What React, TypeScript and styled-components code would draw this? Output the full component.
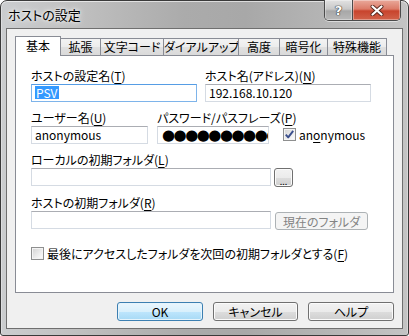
import React from "react";
import styled, { createGlobalStyle } from "styled-components";

const GlobalStyle = createGlobalStyle`
  html, body {
    margin: 0;
    padding: 0;
    background: #ffffff;
  }
  body {
    font-family: "Noto Sans CJK JP", "Liberation Sans", sans-serif;
    font-size: 12px;
    color: #000;
  }
  #root {
    width: 409px;
    height: 336px;
  }
`;

const Window = styled.div`
  box-sizing: border-box;
  width: 409px;
  height: 336px;
  display: flex;
  flex-direction: column;
  padding: 0 5px 6px;
  border: 1px solid #3a3a3a;
  border-radius: 7px 7px 3px 3px;
  background: linear-gradient(
    to right,
    #cbcdcf 0%,
    #bfbfbf 20%,
    #ababab 45%,
    #a8a8a8 60%,
    #b5b5b5 80%,
    #c4c4c4 100%
  );
  box-shadow: inset 0 1px 0 rgba(255, 255, 255, 0.6),
    inset 1px 0 0 rgba(255, 255, 255, 0.35), inset -1px 0 0 rgba(255, 255, 255, 0.35);
`;

const TitleBar = styled.div`
  height: 27px;
  display: flex;
  align-items: flex-start;
  flex-shrink: 0;
`;

const Caption = styled.div`
  flex: 1;
  height: 27px;
  line-height: 27px;
  padding-left: 2px;
  font-size: 13px;
  font-feature-settings: "palt";
  text-shadow: 0 0 6px rgba(255, 255, 255, 0.95), 0 0 3px rgba(255, 255, 255, 0.9);
`;

const ControlBox = styled.div`
  display: flex;
  margin-top: -1px;
  margin-right: 2px;
  height: 20px;
  border: 1px solid #4b4b4b;
  border-top: none;
  border-radius: 0 0 5px 5px;
  overflow: hidden;
  box-shadow: 0 1px 0 rgba(255, 255, 255, 0.5);
`;

const CaptionButton = styled.div<{ $close?: boolean }>`
  width: ${(p) => (p.$close ? 47 : 27)}px;
  height: 20px;
  display: flex;
  align-items: center;
  justify-content: center;
  box-shadow: inset 0 0 0 1px rgba(255, 255, 255, 0.35);
  background: ${(p) =>
    p.$close
      ? "linear-gradient(#e9a99b 0%, #dc7b68 45%, #c8442d 55%, #d1624a 100%)"
      : "linear-gradient(#e2e2e2 0%, #c8c8c8 45%, #a7a7a7 55%, #b9b9b9 100%)"};
  & + & {
    border-left: 1px solid #4b4b4b;
  }
`;

const HelpGlyph = styled.span`
  font-family: "DejaVu Sans", sans-serif;
  font-weight: bold;
  font-size: 13px;
  line-height: 1;
  color: #ffffff;
  text-shadow: 0 0 1px #333, 0 0 1px #333, 0 0 1px #333;
`;

const Client = styled.div`
  flex: 1;
  display: flex;
  flex-direction: column;
  border: 1px solid #6f6f6f;
  background: #f0f0f0;
  padding: 7px 8px 0;
`;

const TabStrip = styled.div`
  display: flex;
  align-items: flex-start;
  height: 20px;
  margin-bottom: -1px;
`;

const Tab = styled.div<{ $w: number; $active?: boolean }>`
  box-sizing: border-box;
  width: ${(p) => p.$w}px;
  text-align: center;
  font-feature-settings: "palt";
  white-space: nowrap;
  border: 1px solid #898c95;
  border-bottom: none;
  & + & {
    margin-left: -1px;
  }
  ${(p) =>
    p.$active
      ? `
    position: relative;
    z-index: 1;
    height: 20px;
    line-height: 18px;
    background: #ffffff;
  `
      : `
    margin-top: 2px;
    height: 17px;
    line-height: 16px;
    background: linear-gradient(#f3f3f3 0%, #ececec 50%, #e0e0e0 51%, #dadada 100%);
  `}
`;

const Panel = styled.div`
  height: 238px;
  box-sizing: border-box;
  border: 1px solid #898c95;
  background: #ffffff;
  padding: 12px 15px 0;
  display: flex;
  flex-direction: column;
  gap: 8px;
`;

const Row = styled.div<{ $gap?: number }>`
  display: flex;
  align-items: flex-end;
  gap: ${(p) => p.$gap ?? 0}px;
`;

const FieldGroup = styled.div<{ $w: number }>`
  width: ${(p) => p.$w}px;
  display: flex;
  flex-direction: column;
`;

const Label = styled.div`
  height: 16px;
  line-height: 16px;
  white-space: nowrap;
  font-feature-settings: "palt";
  u {
    text-decoration-thickness: 1px;
    text-underline-offset: 2px;
  }
`;

const Control = styled.div`
  display: flex;
  align-items: flex-start;
  gap: 3px;
`;

const TextBox = styled.div<{ $w?: number; $focused?: boolean }>`
  box-sizing: border-box;
  width: ${(p) => (p.$w ? `${p.$w}px` : "100%")};
  height: 18px;
  line-height: 16px;
  padding-left: 3px;
  background: #ffffff;
  white-space: nowrap;
  overflow: hidden;
  border: 1px solid ${(p) => (p.$focused ? "#7eb4ea" : "#d5dbe3")};
  border-top-color: ${(p) => (p.$focused ? "#569de5" : "#abadb3")};
  font-family: "Noto Sans CJK JP", "Liberation Sans", sans-serif;
`;

const Selected = styled.span`
  display: inline-block;
  line-height: 13px;
  padding: 0 1px;
  margin-top: 1px;
  background: #3399ff;
  color: #ffffff;
`;

const Mask = styled.span`
  display: block;
  font-family: "DejaVu Sans", sans-serif;
  font-size: 15px;
  letter-spacing: -1.5px;
  line-height: 16px;
  margin-left: 1px;
`;

const Button = styled.div<{ $w: number; $h?: number; $default?: boolean; $disabled?: boolean }>`
  box-sizing: border-box;
  width: ${(p) => p.$w}px;
  height: ${(p) => p.$h ?? 19}px;
  display: flex;
  align-items: center;
  justify-content: center;
  border-radius: 3px;
  font-feature-settings: "palt";
  white-space: nowrap;
  border: 1px solid
    ${(p) => (p.$default ? "#3c7fb1" : p.$disabled ? "#adb2b5" : "#707070")};
  color: ${(p) => (p.$disabled ? "#838383" : "#000")};
  box-shadow: inset 0 0 0 1px
    ${(p) => (p.$disabled ? "#f4f4f4" : p.$default ? "#e6f4fc" : "#fbfbfb")};
  background: ${(p) =>
    p.$disabled
      ? "#f4f4f4"
      : p.$default
      ? "linear-gradient(#eaf6fd 0%, #d9f0fc 50%, #bee6fd 51%, #a7d9f5 100%)"
      : "linear-gradient(#f2f2f2 0%, #ebebeb 50%, #dddddd 51%, #cfcfcf 100%)"};
`;

const Ellipsis = styled.span`
  font-size: 9px;
  line-height: 1;
  margin-top: 7px;
`;

const CheckLine = styled.label`
  display: flex;
  align-items: center;
  gap: 3px;
  white-space: nowrap;
  font-feature-settings: "palt";
  u {
    text-decoration-thickness: 1px;
    text-underline-offset: 2px;
  }
`;

const Box = styled.span`
  box-sizing: border-box;
  width: 13px;
  height: 13px;
  flex-shrink: 0;
  border: 1px solid #8e8f8f;
  display: flex;
  align-items: center;
  justify-content: center;
  background: linear-gradient(135deg, #d2d2d2 0%, #eeeeee 60%, #ffffff 100%);
  box-shadow: inset 0 0 0 1px #f4f4f4;
`;

const ButtonRow = styled.div`
  display: flex;
  justify-content: flex-end;
  gap: 10px;
  margin-top: 9px;
`;

function CheckBox({ checked }: { checked?: boolean }) {
  return (
    <Box>
      {checked && (
        <svg width="9" height="9" viewBox="0 0 9 9">
          <path
            d="M0.8 4.6 L3.2 7.4 L8.2 0.9"
            fill="none"
            stroke="#3b4f8c"
            strokeWidth="1.9"
            strokeLinejoin="round"
          />
        </svg>
      )}
    </Box>
  );
}

function CloseGlyph() {
  return (
    <svg width="14" height="11" viewBox="0 0 14 11">
      <path
        d="M2.5 1.5 L11.5 9.5 M11.5 1.5 L2.5 9.5"
        stroke="#5a2a20"
        strokeWidth="4"
        strokeLinecap="round"
      />
      <path
        d="M2.5 1.5 L11.5 9.5 M11.5 1.5 L2.5 9.5"
        stroke="#ffffff"
        strokeWidth="2.2"
        strokeLinecap="round"
      />
    </svg>
  );
}

const tabs = [
  { label: "基本", w: 46 },
  { label: "拡張", w: 41 },
  { label: "文字コード", w: 64 },
  { label: "ダイアルアップ", w: 76 },
  { label: "高度", w: 42 },
  { label: "暗号化", w: 49 },
  { label: "特殊機能", w: 60 },
];

export default function App() {
  return (
    <>
      <GlobalStyle />
      <Window>
        <TitleBar>
          <Caption>ホストの設定</Caption>
          <ControlBox>
            <CaptionButton>
              <HelpGlyph>?</HelpGlyph>
            </CaptionButton>
            <CaptionButton $close>
              <CloseGlyph />
            </CaptionButton>
          </ControlBox>
        </TitleBar>
        <Client>
          <TabStrip>
            {tabs.map((t, i) => (
              <Tab key={t.label} $w={t.w} $active={i === 0}>
                {t.label}
              </Tab>
            ))}
          </TabStrip>
          <Panel>
            <Row $gap={8}>
              <FieldGroup $w={166}>
                <Label>
                  ホストの設定名(<u>T</u>)
                </Label>
                <TextBox $focused>
                  <Selected>PSV</Selected>
                </TextBox>
              </FieldGroup>
              <FieldGroup $w={166}>
                <Label>
                  ホスト名(アドレス)(<u>N</u>)
                </Label>
                <TextBox>192.168.10.120</TextBox>
              </FieldGroup>
            </Row>
            <Row $gap={9}>
              <FieldGroup $w={117}>
                <Label>
                  ユーザー名(<u>U</u>)
                </Label>
                <TextBox>anonymous</TextBox>
              </FieldGroup>
              <FieldGroup $w={112}>
                <Label>
                  パスワード/パスフレーズ(<u>P</u>)
                </Label>
                <TextBox>
                  <Mask>●●●●●●●●●●●</Mask>
                </TextBox>
              </FieldGroup>
              <CheckLine style={{ marginLeft: 5, marginBottom: 1 }}>
                <CheckBox checked />
                <span>
                  an<u>o</u>nymous
                </span>
              </CheckLine>
            </Row>
            <FieldGroup $w={262}>
              <Label>
                ローカルの初期フォルダ(<u>L</u>)
              </Label>
              <Control>
                <TextBox $w={240} />
                <Button $w={19}>
                  <Ellipsis>...</Ellipsis>
                </Button>
              </Control>
            </FieldGroup>
            <FieldGroup $w={340}>
              <Label>
                ホストの初期フォルダ(<u>R</u>)
              </Label>
              <Control>
                <TextBox $w={240} />
                <Button $w={93} $h={18} $disabled style={{ marginTop: 1, marginLeft: 1 }}>
                  現在のフォルダ
                </Button>
              </Control>
            </FieldGroup>
            <CheckLine style={{ marginTop: 7 }}>
              <CheckBox />
              <span>
                最後にアクセスしたフォルダを次回の初期フォルダとする(<u>F</u>)
              </span>
            </CheckLine>
          </Panel>
          <ButtonRow>
            <Button $w={86} $default>
              OK
            </Button>
            <Button $w={85}>キャンセル</Button>
            <Button $w={86}>ヘルプ</Button>
          </ButtonRow>
        </Client>
      </Window>
    </>
  );
}
